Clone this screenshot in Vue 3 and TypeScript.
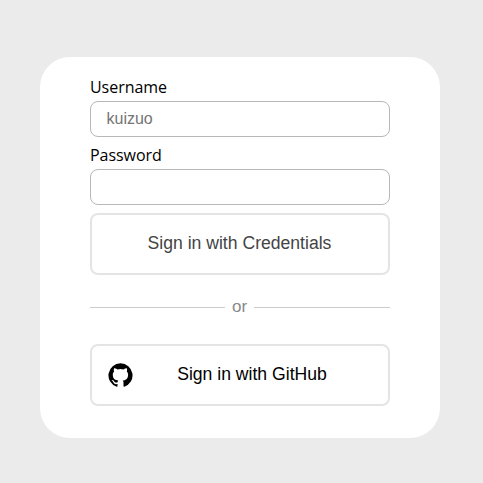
<script setup lang="ts">
import { ref } from 'vue'

const username = ref<string>('')
const password = ref<string>('')
</script>

<template>
  <main class="page">
    <section class="card">
      <form class="form" @submit.prevent>
        <label class="label" for="username">Username</label>
        <input id="username" v-model="username" class="input" type="text" placeholder="kuizuo" />
        <label class="label" for="password">Password</label>
        <input id="password" v-model="password" class="input" type="password" />
        <button class="button credentials" type="submit">Sign in with Credentials</button>
      </form>
      <div class="divider"><span class="or">or</span></div>
      <button class="button github" type="button">
        <svg class="logo" viewBox="0 0 24 24" aria-hidden="true">
          <path
            d="M12 .3a12 12 0 0 0-3.8 23.4c.6.1.8-.3.8-.6v-2c-3.3.7-4-1.6-4-1.6-.6-1.4-1.4-1.8-1.4-1.8-1-.7.1-.7.1-.7 1.2 0 1.9 1.2 1.9 1.2 1 1.8 2.8 1.3 3.5 1 0-.8.4-1.3.7-1.6-2.7-.3-5.5-1.3-5.5-6 0-1.2.5-2.3 1.3-3.1-.2-.4-.6-1.6 0-3.2 0 0 1-.3 3.4 1.2a11.500 11.500 0 0 1 6 0c2.300-1.500 3.300-1.200 3.300-1.200.6 1.600.2 2.800 0 3.200.9.8 1.300 1.900 1.300 3.200 0 4.600-2.800 5.600-5.500 5.900.5.4.9 1 .9 2.200v3.300c0 .3.100.7.800.6A12 12 0 0 0 12 .3"
          />
        </svg>
        <span class="github-text">Sign in with GitHub</span>
      </button>
    </section>
  </main>
</template>

<style>
body {
  margin: 0;
  background: #ebebeb;
}
</style>

<style scoped>
.page {
  box-sizing: border-box;
  height: 100vh;
  padding: 57px 0 0 40px;
  background: #ebebeb;
  font-family: 'Open Sans', 'Noto Sans', sans-serif;
}
.card {
  box-sizing: border-box;
  width: 400px;
  height: 381px;
  padding: 20px 50px 0;
  border-radius: 30px;
  background: #fff;
}
.form {
  display: flex;
  flex-direction: column;
}
.label {
  height: 24px;
  font-size: 16px;
  line-height: 21px;
  letter-spacing: -0.04px;
  color: #000;
}
.input {
  box-sizing: border-box;
  width: 300px;
  height: 36px;
  margin: 0 0 8px;
  padding: 0 15.5px;
  border: 1px solid #b8b8b8;
  border-radius: 8px;
  outline: none;
  background: #fff;
  font-family: 'Liberation Sans', Arial, sans-serif;
  font-size: 16px;
}
.input::placeholder {
  color: #757575;
  opacity: 1;
}
.button {
  box-sizing: border-box;
  display: flex;
  align-items: center;
  justify-content: center;
  width: 300px;
  height: 62px;
  margin: 0;
  padding: 0 16px;
  border: 2px solid #e4e4e4;
  border-radius: 8px;
  background: #fff;
  font-family: 'Liberation Sans', Arial, sans-serif;
  font-size: 17.6px;
  line-height: 20px;
}
.credentials {
  padding: 0 17px 2px 16px;
  color: #444;
}
.github {
  color: #000;
}
.logo {
  width: 25px;
  height: 24px;
  flex: none;
}
.github-text {
  flex: 1;
  padding: 0 1px 2px 0;
  text-align: center;
}
.divider {
  display: grid;
  grid-template-columns: 135px 29px 136px;
  align-items: center;
  height: 20px;
  margin: 22px 0 27px;
  font-family: 'Liberation Sans', Arial, sans-serif;
  font-size: 17px;
  color: #888;
}
.divider::before,
.divider::after {
  content: '';
  height: 1px;
  background: #ccc;
}
.or {
  line-height: 20px;
  text-align: center;
}
</style>
